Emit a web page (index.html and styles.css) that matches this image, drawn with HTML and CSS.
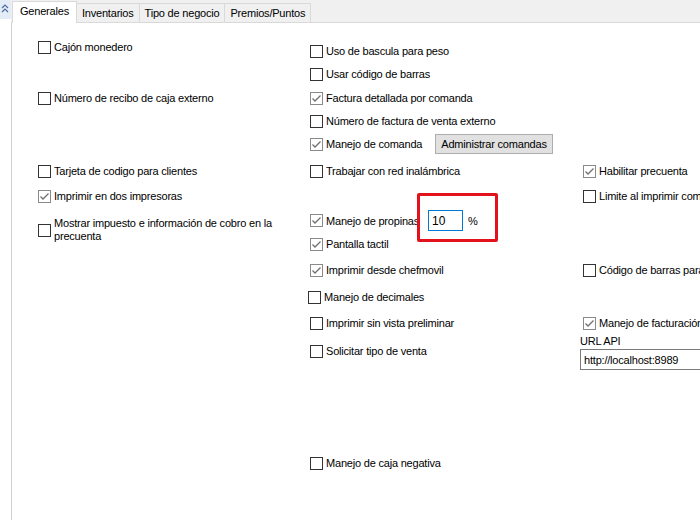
FILE: index.html
```html
<!DOCTYPE html>
<html lang="es">
<head>
  <meta charset="UTF-8" />
  <title>Configuración - Generales</title>
  <link rel="stylesheet" href="styles.css">
</head>
<body>

  <div class="window">
    <aside class="side">
      <span class="collapse">
        <svg width="11" height="19" viewBox="0 0 11 19">
          <polyline points="2,8 5,5 8,8" fill="none" stroke="#4d6f9e" stroke-width="1.2"/>
          <polyline points="2,12 5,9 8,12" fill="none" stroke="#4d6f9e" stroke-width="1.2"/>
        </svg>
      </span>
    </aside>

    <div class="main">
      <nav class="tabs">
        <div class="tab active">Generales</div>
        <div class="tab">Inventarios</div>
        <div class="tab">Tipo de negocio</div>
        <div class="tab">Premios/Puntos</div>
      </nav>

      <section class="page">
        <!-- columna izquierda -->
        <div class="col col-1">
          <label class="chk mt-16"><span class="box"></span>Cajón monedero</label>
          <label class="chk mt-35"><span class="box"></span>Número de recibo de caja externo</label>
          <label class="chk mt-57"><span class="box"></span>Tarjeta de codigo para clientes</label>
          <label class="chk mt-9"><span class="box on"><svg viewBox="0 0 11 11"><polyline points="1.5,5.5 4,8 9.5,2.5"/></svg></span>Imprimir en dos impresoras</label>
          <label class="chk multi mt-13"><span class="box"></span><span class="wrap">Mostrar impuesto e información de cobro en la precuenta</span></label>
        </div>

        <!-- columna central -->
        <div class="col col-2">
          <label class="chk mt-20"><span class="box"></span>Uso de bascula para peso</label>
          <label class="chk mt-7"><span class="box"></span>Usar código de barras</label>
          <label class="chk mt-8"><span class="box on"><svg viewBox="0 0 11 11"><polyline points="1.5,5.5 4,8 9.5,2.5"/></svg></span>Factura detallada por comanda</label>
          <label class="chk mt-7"><span class="box"></span>Número de factura de venta externo</label>
          <div class="chk tall mt-5"><span class="box on"><svg viewBox="0 0 11 11"><polyline points="1.5,5.5 4,8 9.5,2.5"/></svg></span><span class="cmd-label">Manejo de comanda</span><button class="btn">Administrar comandas</button></div>
          <label class="chk mt-9"><span class="box"></span>Trabajar con red inalámbrica</label>
          <div class="chk field mt-31"><span class="box on"><svg viewBox="0 0 11 11"><polyline points="1.5,5.5 4,8 9.5,2.5"/></svg></span><span class="tip-label">Manejo de propinas</span><input class="tip" type="text" value="10"><span class="pct">%</span></div>
          <label class="chk mt-5"><span class="box on"><svg viewBox="0 0 11 11"><polyline points="1.5,5.5 4,8 9.5,2.5"/></svg></span>Pantalla tactil</label>
          <label class="chk mt-10"><span class="box on"><svg viewBox="0 0 11 11"><polyline points="1.5,5.5 4,8 9.5,2.5"/></svg></span>Imprimir desde chefmovil</label>
          <label class="chk shift mt-11"><span class="box"></span>Manejo de decimales</label>
          <label class="chk mt-10"><span class="box"></span>Imprimir sin vista preliminar</label>
          <label class="chk mt-12"><span class="box"></span>Solicitar tipo de venta</label>
          <label class="chk mt-96"><span class="box"></span>Manejo de caja negativa</label>
        </div>

        <!-- columna derecha -->
        <div class="col col-3">
          <label class="chk mt-140"><span class="box on"><svg viewBox="0 0 11 11"><polyline points="1.5,5.5 4,8 9.5,2.5"/></svg></span>Habilitar precuenta</label>
          <label class="chk mt-9"><span class="box"></span>Limite al imprimir comandas</label>
          <label class="chk mt-58"><span class="box"></span>Código de barras para productos</label>
          <label class="chk mt-37"><span class="box on"><svg viewBox="0 0 11 11"><polyline points="1.5,5.5 4,8 9.5,2.5"/></svg></span>Manejo de facturación electrónica</label>
          <div class="url-label">URL API</div>
          <input class="url" type="text" value="http://localhost:8989">
        </div>
      </section>
    </div>

    <div class="highlight"></div>
  </div>

</body>
</html>
```

FILE: styles.css
```css
* {
  box-sizing: border-box;
  margin: 0;
  padding: 0;
}

body {
  font-family: 'Liberation Sans', Arial, sans-serif;
  font-size: 11px;
  letter-spacing: -0.2px;
  color: #000;
  background: #fff;
  overflow: hidden;
}

.window {
  position: relative;
  display: flex;
  width: 700px;
  height: 522px;
  overflow: hidden;
}

.side {
  width: 11px;
  flex: none;
}

.collapse {
  display: block;
  height: 19px;
  background: #e3ecf7;
}

.collapse svg {
  display: block;
}

.main {
  flex: 1;
  min-width: 0;
}

/* pestañas */

.tabs {
  display: flex;
  align-items: flex-end;
  height: 23px;
  padding-left: 1px;
  background: #f0f0f0;
  border-bottom: 1px solid #d9d9d9;
}

.tab {
  height: 19px;
  padding: 0 5px;
  line-height: 18px;
  background: #f0f0f0;
  border: 1px solid #d9d9d9;
  border-bottom: none;
  margin-left: -1px;
  white-space: nowrap;
}

.tab:first-child {
  margin-left: 0;
}

.tab.active {
  position: relative;
  z-index: 1;
  height: 22px;
  padding: 0 7px;
  line-height: 18px;
  background: #fff;
  margin-bottom: -1px;
}

/* página */

.page {
  display: grid;
  grid-template-columns: 296px 272px 1fr;
  height: 497px;
  border-left: 1px solid #d0d0d0;
}

.col {
  display: flex;
  flex-direction: column;
  align-items: flex-start;
  min-width: 0;
}

.col-1 { padding-left: 26px; }
.col-2 { padding-left: 2px; }
.col-3 { padding-left: 3px; }

.chk {
  display: flex;
  align-items: center;
  gap: 3px;
  height: 16px;
  white-space: nowrap;
}

.chk.tall { height: 20px; }
.chk.field { height: 21px; }
.chk.shift { margin-left: -2px; }

.chk.multi {
  height: auto;
  white-space: normal;
}

.wrap {
  width: 222px;
  line-height: 13px;
}

.box {
  display: block;
  width: 13px;
  height: 13px;
  flex: none;
  border: 1px solid #333;
  background: #fff;
}

.box.on {
  border-color: #8a8a8a;
}

.box svg {
  display: block;
  width: 11px;
  height: 11px;
}

.box polyline {
  fill: none;
  stroke: #6f6f6f;
  stroke-width: 1.3;
}

.cmd-label { width: 106px; }
.tip-label { width: 99px; }

.btn {
  width: 118px;
  height: 20px;
  font: inherit;
  letter-spacing: inherit;
  color: #000;
  background: #e1e1e1;
  border: 1px solid #adadad;
}

.tip {
  width: 35px;
  height: 21px;
  padding: 0 3px;
  font: inherit;
  font-size: 12px;
  border: 1px solid #0078d7;
  outline: none;
}

.pct {
  margin-left: 2px;
}

.url-label {
  margin-top: 3px;
  margin-left: -3px;
  line-height: 14px;
}

.url {
  width: 140px;
  height: 21px;
  margin-top: 1px;
  margin-left: -3px;
  padding: 0 3px;
  font: inherit;
  letter-spacing: inherit;
  border: 1px solid #7a7a7a;
  outline: none;
}

.highlight {
  position: absolute;
  left: 417px;
  top: 193px;
  width: 81px;
  height: 49px;
  border: 3px solid #e3111b;
  border-radius: 2px;
  pointer-events: none;
}

/* separaciones */

.mt-5 { margin-top: 5px; }
.mt-7 { margin-top: 7px; }
.mt-8 { margin-top: 8px; }
.mt-9 { margin-top: 9px; }
.mt-10 { margin-top: 10px; }
.mt-11 { margin-top: 11px; }
.mt-12 { margin-top: 12px; }
.mt-13 { margin-top: 13px; }
.mt-16 { margin-top: 16px; }
.mt-20 { margin-top: 20px; }
.mt-31 { margin-top: 31px; }
.mt-35 { margin-top: 35px; }
.mt-37 { margin-top: 37px; }
.mt-57 { margin-top: 57px; }
.mt-58 { margin-top: 58px; }
.mt-96 { margin-top: 96px; }
.mt-140 { margin-top: 140px; }
```
